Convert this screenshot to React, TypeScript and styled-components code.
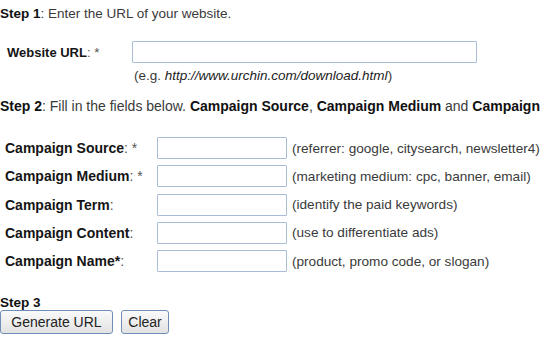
import React from "react";
import styled, { createGlobalStyle } from "styled-components";

const GlobalStyle = createGlobalStyle`
  html, body {
    margin: 0;
    padding: 0;
    background: #fff;
    overflow: hidden;
  }
  body {
    font-family: "Liberation Sans", Arial, sans-serif;
    color: #3a3a3a;
  }
`;

const Page = styled.div`
  width: 545px;
  height: 347px;
  overflow: hidden;
  display: flex;
  flex-direction: column;
`;

const StepLine = styled.div<{ $top: number; $size?: number }>`
  margin-top: ${(p) => p.$top}px;
  font-size: ${(p) => p.$size ?? 13.5}px;
  line-height: 15px;
  white-space: nowrap;
  color: #3a3a3a;

  b {
    color: #111;
  }
`;

const UrlRow = styled.div`
  display: grid;
  grid-template-columns: 125px 345px;
  align-items: center;
  margin-top: 20px;
  padding-left: 7px;
`;

const Label = styled.label<{ $size: number }>`
  font-size: ${(p) => p.$size}px;
  font-weight: bold;
  color: #151515;
  white-space: nowrap;

  span {
    font-weight: normal;
    color: #555;
  }
`;

const TextInput = styled.input<{ $width: number }>`
  box-sizing: border-box;
  width: ${(p) => p.$width}px;
  height: 22px;
  margin: 0;
  border: 1px solid #a9bdd8;
  border-radius: 1px;
  background: #fff;
  padding: 2px 4px;
  font: 13px "Liberation Sans", Arial, sans-serif;
`;

const Example = styled.div`
  margin-top: 6px;
  padding-left: 134px;
  font-size: 13.5px;
  line-height: 14px;
  color: #3a3a3a;

  i {
    color: #222;
  }
`;

const Fields = styled.div`
  display: grid;
  grid-template-columns: 152px 130px auto;
  grid-auto-rows: 22px;
  row-gap: 6.25px;
  align-items: center;
  margin-top: 23px;
  padding-left: 5px;
`;

const Hint = styled.span`
  padding-left: 5px;
  font-size: 13.6px;
  color: #3a3a3a;
  white-space: nowrap;
`;

const Buttons = styled.div`
  display: flex;
  gap: 8px;
`;

const Button = styled.button<{ $width: number }>`
  box-sizing: border-box;
  width: ${(p) => p.$width}px;
  height: 24px;
  padding: 0;
  border: 1px solid #6f8fb8;
  border-radius: 3px;
  background: linear-gradient(#fafafa, #e2e2e2);
  font: 14px "Liberation Sans", Arial, sans-serif;
  color: #222;
`;

const fields = [
  { name: "Campaign Source", suffix: ": *", hint: "(referrer: google, citysearch, newsletter4)" },
  { name: "Campaign Medium", suffix: ": *", hint: "(marketing medium: cpc, banner, email)" },
  { name: "Campaign Term", suffix: ":", hint: "(identify the paid keywords)" },
  { name: "Campaign Content", suffix: ":", hint: "(use to differentiate ads)" },
  { name: "Campaign Name*", suffix: ":", hint: "(product, promo code, or slogan)" },
];

export default function App() {
  return (
    <Page>
      <GlobalStyle />
      <StepLine $top={6}>
        <b>Step 1</b>: Enter the URL of your website.
      </StepLine>

      <UrlRow>
        <Label $size={13}>
          Website URL<span>: *</span>
        </Label>
        <TextInput $width={345} />
      </UrlRow>
      <Example>
        (e.g. <i>http://www.urchin.com/download.html</i>)
      </Example>

      <StepLine $top={16} $size={14}>
        <b>Step 2</b>: Fill in the fields below. <b>Campaign Source</b>, <b>Campaign Medium</b> and{" "}
        <b>Campaign</b>
      </StepLine>

      <Fields>
        {fields.map((f) => (
          <React.Fragment key={f.name}>
            <Label $size={14}>
              {f.name}
              <span>{f.suffix}</span>
            </Label>
            <TextInput $width={130} />
            <Hint>{f.hint}</Hint>
          </React.Fragment>
        ))}
      </Fields>

      <StepLine $top={22.5}>
        <b>Step 3</b>
      </StepLine>
      <Buttons>
        <Button $width={113}>Generate URL</Button>
        <Button $width={48}>Clear</Button>
      </Buttons>
    </Page>
  );
}
